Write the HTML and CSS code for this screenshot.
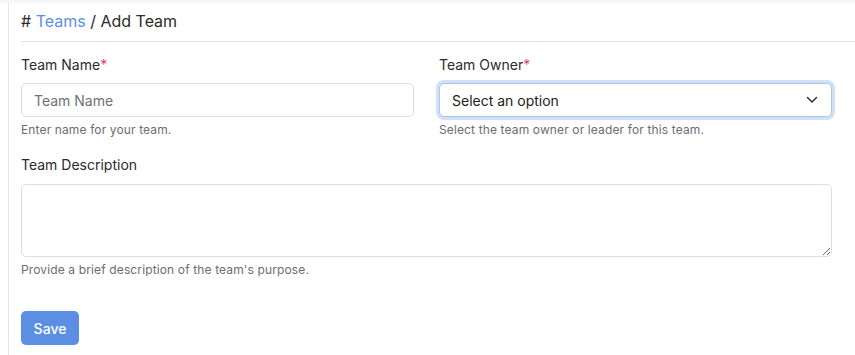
FILE: index.html
```html
<!DOCTYPE html>
<html>
  <head>
    <meta charset="UTF-8">
    <title>Add Team</title>
    <link rel="stylesheet" href="styles.css">
  </head>
  <body>
    <div class="topbar"></div>

    <div class="page">
      <div class="breadcrumb">
        # <a href="#" class="crumb_link">Teams</a> / Add Team
      </div>

      <form class="team_form" onsubmit="return false;">
        <div class="row">
          <div class="field">
            <label for="team_name">Team Name<span class="req">*</span></label>
            <input type="text" id="team_name" name="team_name" placeholder="Team Name">
            <p class="help">Enter name for your team.</p>
          </div>

          <div class="field">
            <label for="team_owner">Team Owner<span class="req">*</span></label>
            <div class="select_wrap">
              <select id="team_owner" name="team_owner">
                <option>Select an option</option>
              </select>
              <svg class="chevron" width="12" height="8" viewBox="0 0 12 8">
                <path d="M1.5 1.5 L6 6 L10.5 1.5" fill="none" stroke="#333" stroke-width="1.5" stroke-linecap="round" stroke-linejoin="round"/>
              </svg>
            </div>
            <p class="help">Select the team owner or leader for this team.</p>
          </div>
        </div>

        <div class="field desc">
          <label for="team_desc">Team Description</label>
          <textarea id="team_desc" name="team_desc"></textarea>
          <p class="help">Provide a brief description of the team's purpose.</p>
        </div>

        <button type="submit" class="btn_save">Save</button>
      </form>
    </div>
  </body>
</html>
```

FILE: styles.css
```css
body {
  margin: 0;
  background: #fff;
  font-family: Inter, "Noto Sans", sans-serif;
  color: #2b2b2b;
}

.topbar {
  height: 3px;
  background: #f5f6f8;
}

.page {
  margin-left: 8px;
  border-left: 1px solid #e2e3e6;
  padding-left: 12px;
  min-height: 352px;
}

.breadcrumb {
  font-size: 16px;
  line-height: 24px;
  padding: 6px 0 8px;
  border-bottom: 1px solid #dedfe2;
}

.crumb_link {
  color: #5b8fe0;
  text-decoration: none;
}

.team_form {
  padding: 13px 23px 0 0;
}

.row {
  display: flex;
  gap: 25px;
}

.row .field {
  flex: 1;
}

.field label {
  display: block;
  font-size: 14px;
  line-height: 20px;
  margin-bottom: 8px;
  color: #2b2b2b;
}

.req {
  color: #e0485c;
}

.field input,
.field select,
.field textarea {
  box-sizing: border-box;
  width: 100%;
  font-family: inherit;
  font-size: 14px;
  border: 1px solid #dcdee3;
  border-radius: 5px;
  background: #fff;
  outline: none;
}

.field input {
  height: 34px;
  padding: 0 12px;
}

.field input::placeholder {
  color: #6f7176;
}

.select_wrap {
  position: relative;
}

.field select {
  appearance: none;
  height: 34px;
  padding: 0 12px;
  color: #222;
  border-color: #a9c3ee;
  box-shadow: 0 0 0 3px #d2e0f8;
}

.chevron {
  position: absolute;
  right: 14px;
  top: 13px;
}

.field textarea {
  display: block;
  height: 73px;
  resize: vertical;
  padding: 8px 12px;
}

.help {
  margin: 5px 0 0;
  font-size: 12px;
  line-height: 16px;
  letter-spacing: 0.13px;
  color: #6b6d72;
}

.desc {
  margin-top: 17px;
}

.desc label {
  margin-bottom: 9px;
}

.btn_save {
  margin-top: 33px;
  height: 34px;
  width: 58px;
  border: none;
  border-radius: 5px;
  background: #5b8fe2;
  color: #fff;
  font-family: inherit;
  font-size: 14px;
  font-weight: 500;
  padding: 0;
}
```
